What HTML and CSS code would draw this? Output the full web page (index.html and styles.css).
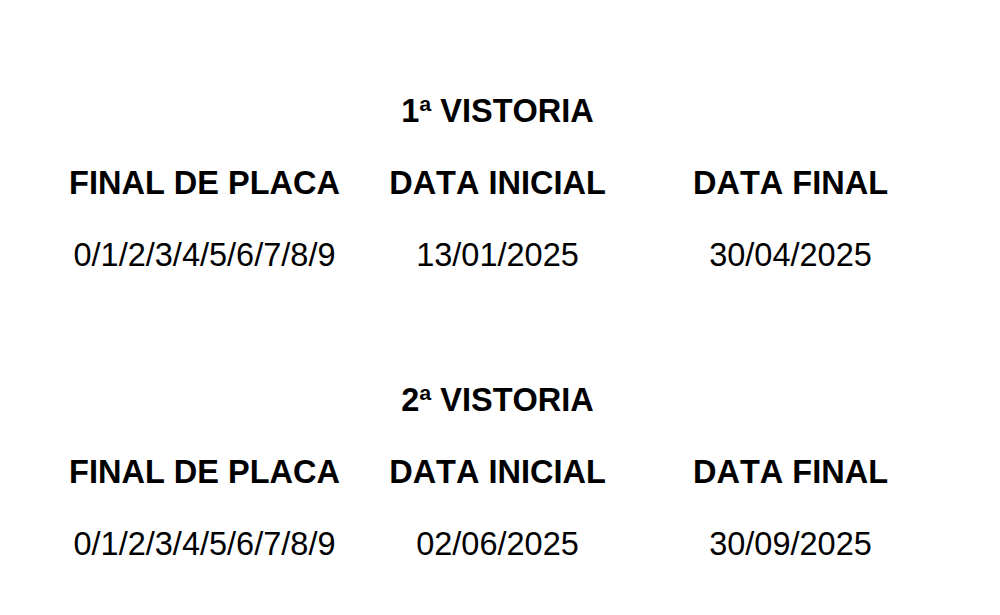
FILE: index.html
```html
<!DOCTYPE html>
<html lang="pt-BR">
<head>
<meta charset="utf-8">
<title>Vistorias</title>
<link rel="stylesheet" href="styles.css">
</head>
<body>
<main class="page">
  <section class="block">
    <h2 class="title">1ª VISTORIA</h2>
    <div class="grid">
      <div class="head">FINAL DE PLACA</div>
      <div class="head">DATA INICIAL</div>
      <div class="head">DATA FINAL</div>
      <div class="cell">0/1/2/3/4/5/6/7/8/9</div>
      <div class="cell">13/01/2025</div>
      <div class="cell">30/04/2025</div>
    </div>
  </section>
  <section class="block">
    <h2 class="title">2ª VISTORIA</h2>
    <div class="grid">
      <div class="head">FINAL DE PLACA</div>
      <div class="head">DATA INICIAL</div>
      <div class="head">DATA FINAL</div>
      <div class="cell">0/1/2/3/4/5/6/7/8/9</div>
      <div class="cell">02/06/2025</div>
      <div class="cell">30/09/2025</div>
    </div>
  </section>
</main>
</body>
</html>
```

FILE: styles.css
```css
html, body {
  margin: 0;
  padding: 0;
  background: #ffffff;
}

body {
  font-family: "Liberation Sans", Arial, sans-serif;
  font-size: 32.5px;
  line-height: 72.3px;
  color: #000000;
  font-kerning: none;
}

.page {
  width: 879px;
  margin-left: 58px;
  padding-top: 74.5px;
  display: flex;
  flex-direction: column;
  gap: 72.3px;
}

.block {
  display: flex;
  flex-direction: column;
}

.title {
  margin: 0;
  font-size: inherit;
  font-weight: 700;
  text-align: center;
  line-height: inherit;
}

.grid {
  display: grid;
  grid-template-columns: repeat(3, 1fr);
  text-align: center;
}

.head {
  font-weight: 700;
}

.cell {
  font-weight: 400;
}
```
